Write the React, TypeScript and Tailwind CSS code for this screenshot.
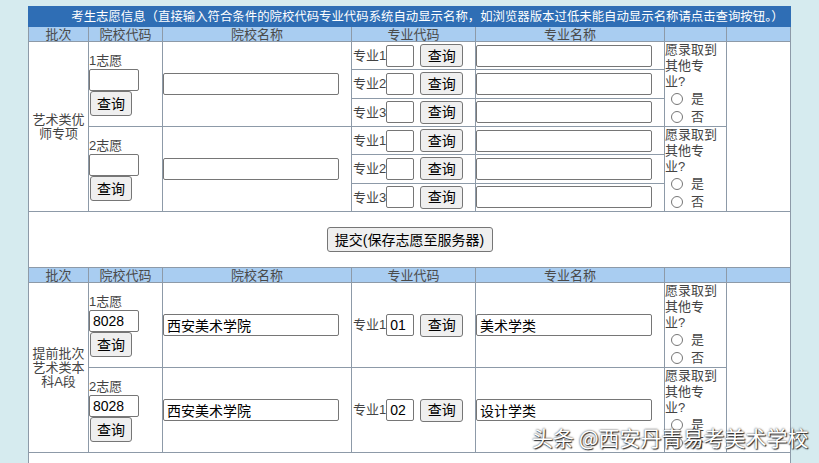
import React from 'react'

const cell = 'border border-[#8d9aa8] p-0'
const input =
  'block h-[22px] rounded-[2px] border border-[#767676] bg-white px-[3px] text-[14px] leading-[20px] text-black outline-none'
const button =
  'rounded-[3px] border border-[#767676] bg-[#efefef] text-[14px] leading-none text-black'

type Choice = { no: number; code: string; school: string; majors: { code: string; name: string }[] }

const earlyChoices: Choice[] = [
  {
    no: 1,
    code: '',
    school: '',
    majors: [
      { code: '', name: '' },
      { code: '', name: '' },
      { code: '', name: '' },
    ],
  },
  {
    no: 2,
    code: '',
    school: '',
    majors: [
      { code: '', name: '' },
      { code: '', name: '' },
      { code: '', name: '' },
    ],
  },
]

const artChoices: Choice[] = [
  { no: 1, code: '8028', school: '西安美术学院', majors: [{ code: '01', name: '美术学类' }] },
  { no: 2, code: '8028', school: '西安美术学院', majors: [{ code: '02', name: '设计学类' }] },
]

function HeaderRow() {
  const heads = ['批次', '院校代码', '院校名称', '专业代码', '专业名称', '', '']
  return (
    <tr className="h-[15px] bg-[#a9cdf1]">
      {heads.map((h, i) => (
        <td key={i} className={`${cell} text-center text-[13px] leading-[13px] text-[#4a4a4a]`}>
          {h}
        </td>
      ))}
    </tr>
  )
}

function MajorCells({ index, code, name }: { index: number; code: string; name: string }) {
  return (
    <>
      <td className={cell}>
        <div className="flex items-center text-[13px] text-[#444]">
          <span className="pl-[1px]">专业{index}</span>
          <input className={`${input} h-[21px] w-[28px]`} defaultValue={code} />
          <button className={`${button} ml-[6px] h-[23px] w-[43px]`}>查询</button>
        </div>
      </td>
      <td className={cell}>
        <input className={`${input} w-[176px]`} defaultValue={name} />
      </td>
    </>
  )
}

function SchoolCells({ choice, span }: { choice: Choice; span: number }) {
  return (
    <>
      <td rowSpan={span} className={`${cell} align-middle`}>
        <div className="text-[13px] leading-[17px] text-[#444]">{choice.no}志愿</div>
        <input className={`${input} h-[21px] w-[50px]`} defaultValue={choice.code} />
        <button className={`${button} ml-[1px] h-[25px] w-[42px]`}>查询</button>
      </td>
      <td rowSpan={span} className={cell}>
        <input className={`${input} w-[176px]`} defaultValue={choice.school} />
      </td>
    </>
  )
}

function RadioCell({ span, name }: { span: number; name: string }) {
  return (
    <td rowSpan={span} className={`${cell} text-[13px] text-[#444]`}>
      <div className="leading-[16px]">
        <div>愿录取到</div>
        <div>其他专</div>
        <div>业?</div>
      </div>
      <label className="flex h-[18px] items-center">
        <input type="radio" name={name} className="m-0 ml-[6px] h-[12px] w-[12px]" />
        <span className="ml-[8px]">是</span>
      </label>
      <label className="flex h-[18px] items-center">
        <input type="radio" name={name} className="m-0 ml-[6px] h-[12px] w-[12px]" />
        <span className="ml-[8px]">否</span>
      </label>
    </td>
  )
}

function Section({
  batch,
  choices,
  rowH,
  prefix,
}: {
  batch: React.ReactNode
  choices: Choice[]
  rowH: string
  prefix: string
}) {
  const total = choices.reduce((n, c) => n + c.majors.length, 0)
  return (
    <>
      {choices.map((c, ci) =>
        c.majors.map((m, mi) => (
          <tr key={`${ci}-${mi}`} className={rowH}>
            {ci === 0 && mi === 0 && (
              <td
                rowSpan={total}
                className={`${cell} px-[3px] text-center text-[13px] leading-[14px] text-[#444]`}
              >
                {batch}
              </td>
            )}
            {mi === 0 && <SchoolCells choice={c} span={c.majors.length} />}
            <MajorCells index={mi + 1} code={m.code} name={m.name} />
            {mi === 0 && <RadioCell span={c.majors.length} name={`${prefix}-${ci}`} />}
            {ci === 0 && mi === 0 && <td rowSpan={total} className={cell} />}
          </tr>
        )),
      )}
    </>
  )
}

export default function App() {
  return (
    <div className="relative h-[463px] overflow-hidden bg-[#d6ebef] pl-[28px] pt-[6px] font-['Liberation_Sans','Noto_Sans_CJK_SC',sans-serif]">
      <table className="w-[762px] table-fixed border-collapse bg-white">
        <colgroup>
          <col className="w-[60px]" />
          <col className="w-[74px]" />
          <col className="w-[189px]" />
          <col className="w-[124px]" />
          <col className="w-[189px]" />
          <col className="w-[62px]" />
          <col className="w-[64px]" />
        </colgroup>
        <tbody>
          <tr className="h-[20px] bg-[#2f6eb5]">
            <td
              colSpan={7}
              className="border border-[#2f6eb5] pl-[36px] text-center text-[12.4px] leading-[18px] text-white"
            >
              考生志愿信息（直接输入符合条件的院校代码专业代码系统自动显示名称，如浏览器版本过低未能自动显示名称请点击查询按钮。）
            </td>
          </tr>
          <HeaderRow />
          <Section
            prefix="a"
            rowH="h-[28px]"
            choices={earlyChoices}
            batch={
              <>
                艺术类优
                <br />
                师专项
              </>
            }
          />
          <tr className="h-[56px]">
            <td colSpan={7} className={`${cell} text-center`}>
              <button className={`${button} h-[25px] w-[166px]`}>提交(保存志愿至服务器)</button>
            </td>
          </tr>
          <HeaderRow />
          <Section
            prefix="b"
            rowH="h-[84px]"
            choices={artChoices}
            batch={
              <>
                提前批次
                <br />
                艺术类本
                <br />
                科A段
              </>
            }
          />
          <tr className="h-[40px]">
            <td colSpan={7} className={cell} />
          </tr>
        </tbody>
      </table>
      <div className="absolute left-[532px] top-[424px] text-[21px] leading-[26px] text-white [text-shadow:0_0_2px_#222,1px_1px_1px_#333] font-['Noto_Sans_CJK_SC',sans-serif]">
        头条 @西安丹青易考美术学校
      </div>
    </div>
  )
}
